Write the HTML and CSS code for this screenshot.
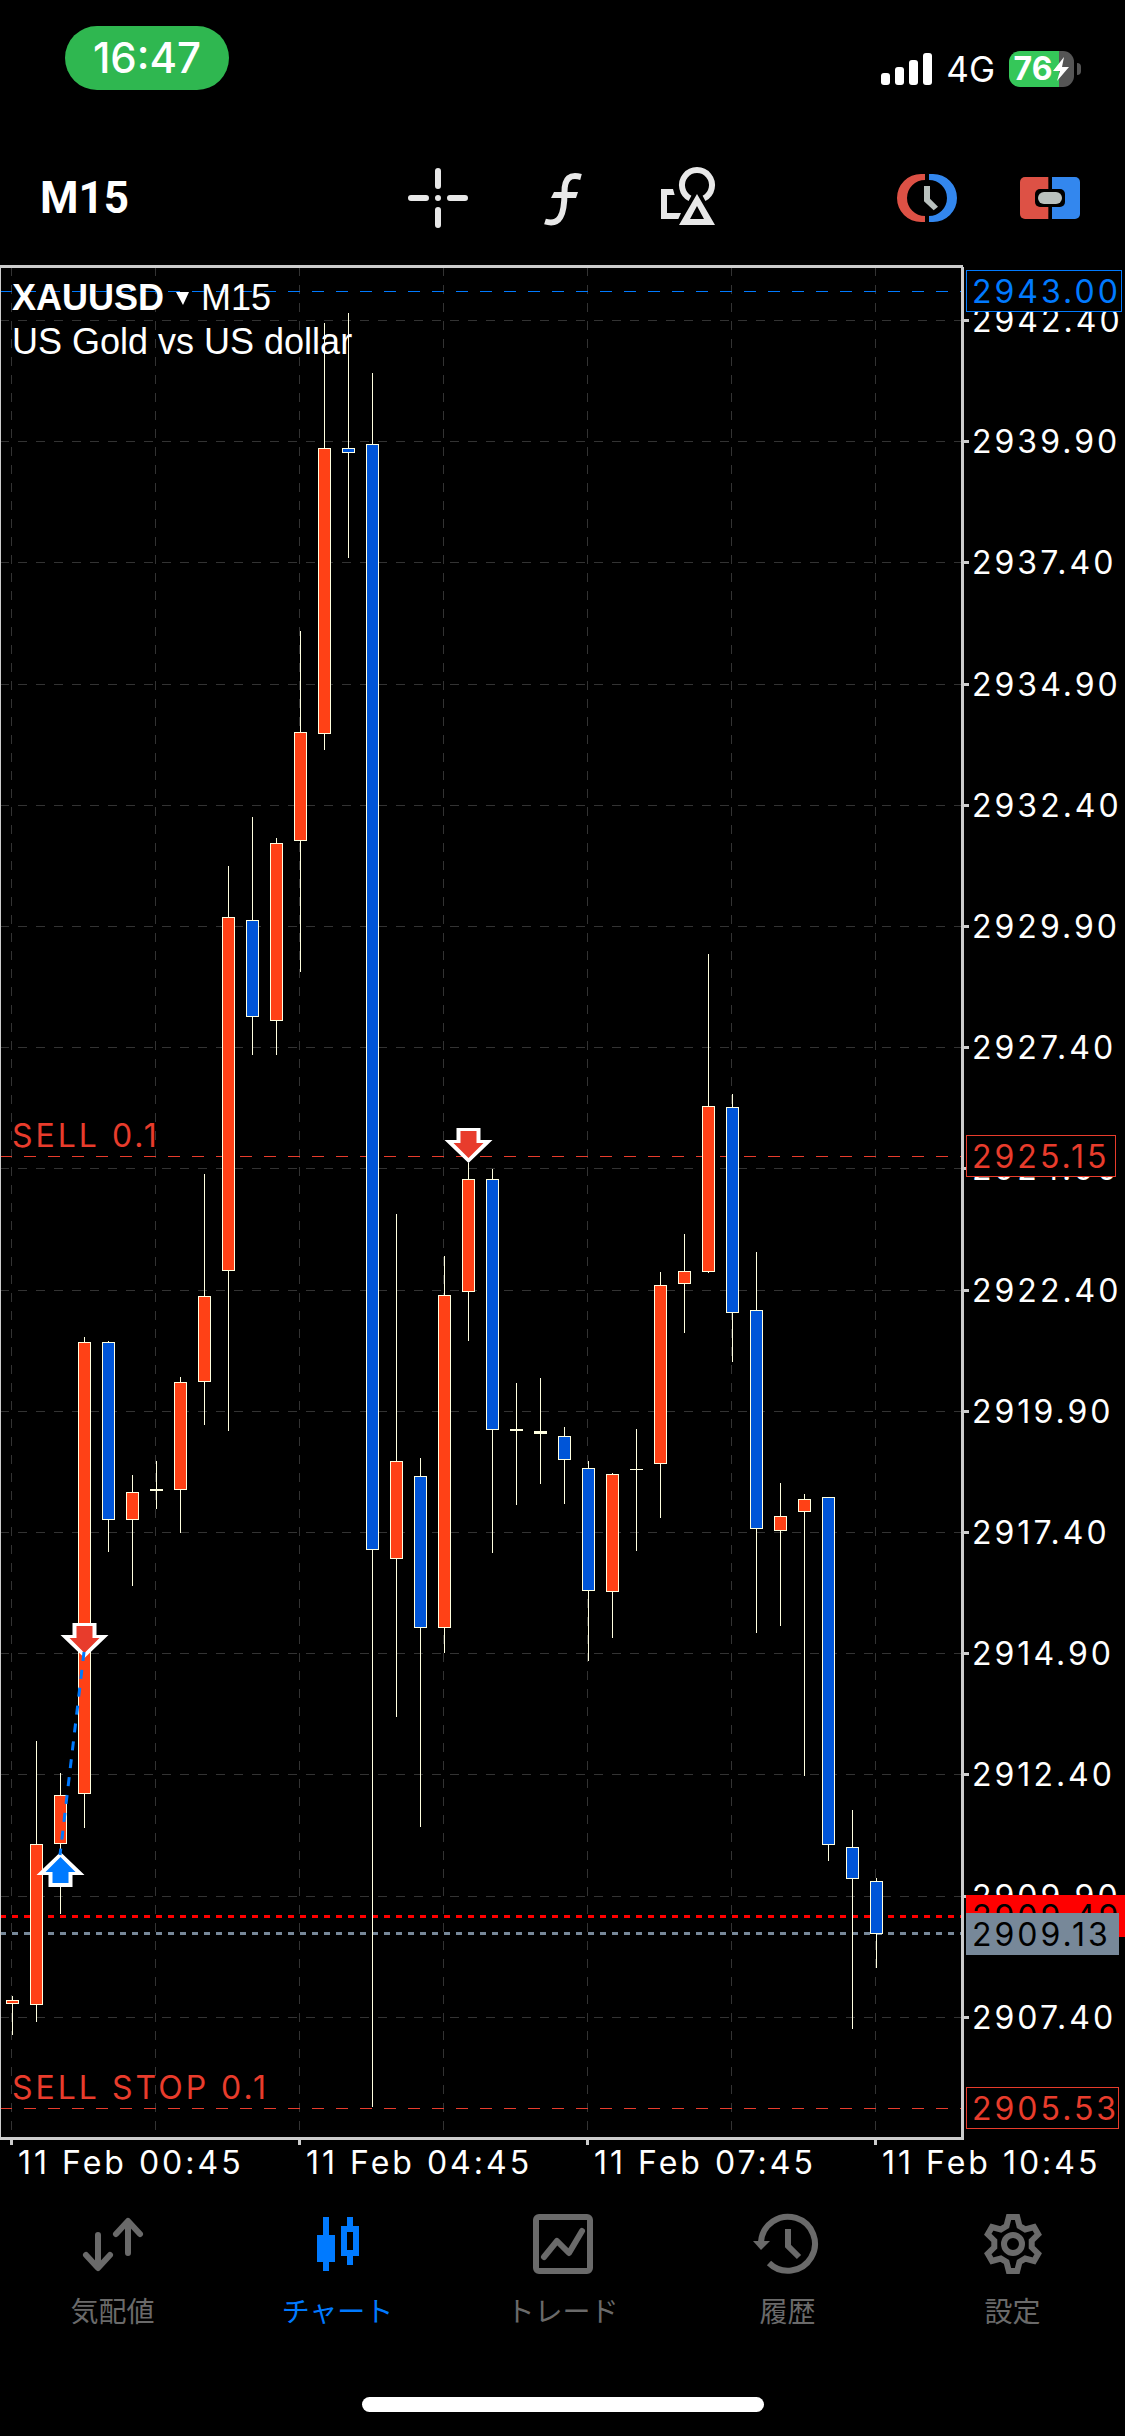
FILE: index.html
```html
<!DOCTYPE html>
<html lang="ja">
<head>
	<meta charset="utf-8">
	<meta name="viewport" content="width=device-width">
	<title>XAUUSD M15</title>
	<link rel="stylesheet" href="styles.css">
</head>
<body>
<header class="status">
	<span class="clock">16:47</span>
	<div class="status-right">
		<svg class="signal" viewBox="0 0 51 32">
			<rect x="0" y="20" width="9" height="12" rx="3"/>
			<rect x="14" y="14" width="9" height="18" rx="3"/>
			<rect x="28" y="7" width="9" height="25" rx="3"/>
			<rect x="42" y="0" width="9" height="32" rx="3"/>
		</svg>
		<span class="network">4G</span>
		<div class="battery">
			<span>76</span>
			<svg class="bolt" viewBox="0 0 16 24"><path d="M11 0 0 14H7L4 24 16 10H9Z"/></svg>
		</div>
	</div>
</header>

<div class="toolbar">
	<button class="timeframe">M15</button>
	<div class="tools">
		<button aria-label="Crosshair">
			<svg class="icon" viewBox="0 0 60 60" fill="none" stroke="#e8e8e8" stroke-width="6" stroke-linecap="round">
				<path d="M30 3V18M30 42V57M3 30H18M42 30H57M30 30H30"/>
			</svg>
		</button>
		<button aria-label="Indicators">
			<svg class="icon" viewBox="0 0 60 60">
				<path d="M48 9C37 6 31.500 10 31.500 24C31.500 47 27 58 12 53.500" fill="none" stroke="#e8e8e8" stroke-width="6"/>
				<path d="M21 24H45L43 30H18Z" fill="#e8e8e8"/>
			</svg>
		</button>
		<button aria-label="Objects">
			<svg class="icon" viewBox="0 0 180 180" fill="#e8e8e8">
				<path d="M9 63H45L50 81H27V135H69L61 153H9Z"/>
				<path d="M96 91A45 45 0 1 1 138 91" fill="none" stroke="#e8e8e8" stroke-width="18"/>
				<path d="M117 78 171 171H63ZM117 114 96 153H138Z" fill-rule="evenodd"/>
			</svg>
		</button>
	</div>
	<div class="trade-tools">
		<button aria-label="Pending order">
			<svg class="icon" viewBox="0 0 180 180">
				<path d="M84 18H72A72 72 0 0 0 72 162H84V144A54 54 0 0 1 84 36Z" fill="#dd5145"/>
				<path d="M96 18H108A72 72 0 0 1 108 162H96V144A54 54 0 0 0 96 36Z" fill="#3387ee"/>
				<path d="M81 54H99V92L123 116 110 127 81 100Z" fill="#b9c1be"/>
			</svg>
		</button>
		<button aria-label="One click trading">
			<svg class="icon" viewBox="0 0 180 180">
				<path d="M85 27H15A15 15 0 0 0 0 42V138A15 15 0 0 0 15 153H85Z" fill="#dd5145"/>
				<path d="M96 27H165A15 15 0 0 1 180 42V138A15 15 0 0 1 165 153H96Z" fill="#3387ee"/>
				<rect x="45" y="63" width="90" height="54" rx="15" fill="#000"/>
				<rect x="54" y="72" width="72" height="36" rx="18" fill="#b9c1be"/>
			</svg>
		</button>
	</div>
</div>

<main class="chart">
	<svg id="plot" viewBox="0 265 1125 1920"></svg>
	<div class="symbol">
		<button><b>XAUUSD</b><svg class="caret" viewBox="0 0 13 13"><path d="M0 0H13L7 13Z"/></svg>M15</button>
		<p>US Gold vs US dollar</p>
	</div>
</main>

<nav class="tabs">
	<a href="#quotes">
		<svg class="icon" viewBox="0 0 60 60" fill="none" stroke="currentColor" stroke-width="6" stroke-linecap="round" stroke-linejoin="round">
			<path d="M15 21V53M3 41 15 54 27 41M45 39V8M33 20 45 7 57 20"/>
		</svg>
		気配値
	</a>
	<a href="#chart" class="active">
		<svg class="icon" viewBox="0 0 60 60" fill="currentColor">
			<path d="M15 3H21V21H27V48H21V57H15V48H9V21H15Z"/>
			<path d="M39 3H45V12H51V42H45V51H39V42H33V12H39ZM39 18V36H45V18Z" fill-rule="evenodd"/>
		</svg>
		チャート
	</a>
	<a href="#trade">
		<svg class="icon" viewBox="0 0 60 60" fill="none" stroke="currentColor" stroke-width="6">
			<rect x="3" y="3" width="54" height="54" rx="3"/>
			<path d="M11 43 24 27 36 39 49 17" stroke-linecap="round" stroke-linejoin="round"/>
		</svg>
		トレード
	</a>
	<a href="#history">
		<svg class="icon" viewBox="0 0 60 60" fill="none" stroke="currentColor" stroke-width="6">
			<path d="M3 28A27 27 0 1 1 11 49M30 15V32L41 43"/>
			<path d="M-5 27H12L3 36Z" fill="currentColor" stroke="none"/>
		</svg>
		履歴
	</a>
	<a href="#settings">
		<svg class="icon" viewBox="-30 -30 60 60" fill="none" stroke="currentColor" stroke-width="6">
			<path d="M-4.200 -27H4.200L6.500 -18 12.200 -14.600 21 -17 25.200 -9.700 18.700 -3.300V3.300L25.200 9.700 21 17 12.200 14.600 6.500 18 4.200 27H-4.200L-6.500 18 -12.200 14.600 -21 17 -25.200 9.700 -18.700 3.300V-3.300L-25.200 -9.700 -21 -17 -12.200 -14.600 -6.500 -18Z"/>
			<circle r="9"/>
		</svg>
		設定
	</a>
</nav>
<div class="home-bar"></div>
<script src="chart.js"></script>
</body>
</html>
```
FILE: styles.css
```css
body {
	margin: 0;
	background: #000;
	color: #fff;
	font-family: Inter, "Noto Sans CJK JP", sans-serif;
}
button {
	margin: 0;
	padding: 0;
	border: 0;
	background: none;
	color: inherit;
	font: inherit;
}
svg {
	display: block;
}
.icon {
	width: 60px;
	height: 60px;
	overflow: visible;
}

/* status bar */
.status {
	display: flex;
	justify-content: space-between;
	align-items: flex-start;
	box-sizing: border-box;
	height: 131px;
	padding: 26px 44px 0 65px;
}
.clock {
	width: 164px;
	border-radius: 32px;
	background: #2fb750;
	font-size: 42px;
	font-weight: 500;
	line-height: 64px;
	text-align: center;
}
.status-right {
	display: flex;
	align-items: center;
	gap: 14px;
	padding-top: 25px;
}
.signal {
	width: 51px;
	height: 32px;
	fill: #fff;
}
.network {
	font-size: 35px;
	line-height: 36px;
}
.battery {
	display: flex;
	align-items: center;
	justify-content: center;
	gap: 1px;
	position: relative;
	width: 65px;
	height: 36px;
	margin-right: 7px;
	border-radius: 11px;
	background: linear-gradient(90deg, #35c759 50px, #555 50px);
	font-size: 32px;
	font-weight: 700;
	line-height: 36px;
}
.battery:after {
	content: "";
	position: absolute;
	right: -7px;
	top: 12px;
	width: 4px;
	height: 12px;
	border-radius: 0 4px 4px 0;
	background: #555;
}
.bolt {
	width: 16px;
	height: 24px;
	fill: #fff;
}

/* toolbar */
.toolbar {
	display: grid;
	grid-template-columns: 1fr auto 1fr;
	align-items: center;
	height: 134px;
	padding: 0 40px;
}
.timeframe {
	justify-self: start;
	font-family: Roboto, sans-serif;
	font-size: 44px;
	font-weight: 700;
}
.tools {
	display: flex;
	gap: 65px;
}
.trade-tools {
	display: flex;
	justify-self: end;
	gap: 63px;
	margin-right: 5px;
}

/* chart */
.chart {
	position: relative;
}
#plot {
	width: 100%;
	height: auto;
}
#plot text {
	fill: #fff;
	font-size: 32px;
	letter-spacing: 3px;
}
.symbol {
	position: absolute;
	top: 11px;
	left: 12px;
	font-family: "Liberation Sans", sans-serif;
	font-size: 36px;
	line-height: 44px;
}
.symbol button {
	display: flex;
	align-items: center;
}
.symbol p {
	margin: 0;
}
.caret {
	width: 13px;
	height: 13px;
	margin: 0 12px;
	fill: #fff;
}
#plot .grid {
	stroke: #333;
	stroke-dasharray: 9 9;
}
#plot .frame {
	fill: #ccc;
}
#plot .order {
	stroke: #e83c2c;
	stroke-dasharray: 12 12;
}
#plot .level {
	stroke: #007aff;
	stroke-dasharray: 12 12;
}
#plot .ask {
	stroke: #f00;
	stroke-width: 3;
	stroke-dasharray: 6 6;
}
#plot .bid {
	stroke: #789;
	stroke-width: 3;
	stroke-dasharray: 6 6;
}
#plot .wick {
	fill: #ffffe0;
}
#plot .body {
	stroke: #ffffe0;
}
#plot .up {
	fill: #ff4116;
}
#plot .down {
	fill: #0055d8;
}
#plot .deal {
	stroke: #007aff;
	stroke-width: 3;
	stroke-dasharray: 9 9;
}
#plot .order-text {
	fill: #e83c2c;
}
#plot .level-text {
	fill: #007aff;
}
#plot .dark-text {
	fill: #000;
}

/* tabs */
.tabs {
	display: grid;
	grid-template-columns: repeat(5, 1fr);
	padding-top: 29px;
}
.tabs a {
	display: flex;
	flex-direction: column;
	align-items: center;
	gap: 16px;
	color: #6a6a6a;
	font-family: "Noto Sans CJK JP", sans-serif;
	font-size: 28px;
	line-height: 40px;
	text-decoration: none;
}
.tabs a.active {
	color: #007aff;
}
.home-bar {
	width: 402px;
	height: 15px;
	margin: 67px auto 24px;
	border-radius: 8px;
	background: #fff;
}
```
FILE: chart.js
```js
const plot = document.getElementById('plot');
const STEP = 24;

// [high, low, body top, body bottom, direction]
const candles = [
	[1996, 2035, 2000, 2004, 'up'],
	[1741, 2022, 1844, 2005, 'up'],
	[1773, 1914, 1795, 1844, 'up'],
	[1337, 1828, 1342, 1794, 'up'],
	[1341, 1552, 1342, 1520, 'down'],
	[1475, 1586, 1492, 1520, 'up'],
	[1461, 1509, 1489, 1491, 'flat'],
	[1377, 1533, 1382, 1490, 'up'],
	[1174, 1425, 1296, 1382, 'up'],
	[866, 1431, 917, 1271, 'up'],
	[817, 1055, 920, 1017, 'down'],
	[838, 1055, 843, 1021, 'up'],
	[631, 972, 732, 841, 'up'],
	[323, 750, 448, 734, 'up'],
	[313, 558, 448, 453, 'down'],
	[373, 2107, 444, 1550, 'down'],
	[1214, 1717, 1461, 1559, 'up'],
	[1458, 1827, 1476, 1628, 'down'],
	[1256, 1653, 1295, 1628, 'up'],
	[1163, 1341, 1179, 1292, 'up'],
	[1169, 1553, 1179, 1430, 'down'],
	[1383, 1505, 1429, 1431, 'flat'],
	[1378, 1484, 1431, 1434, 'flat'],
	[1427, 1504, 1436, 1460, 'down'],
	[1461, 1661, 1468, 1591, 'down'],
	[1473, 1638, 1474, 1592, 'up'],
	[1429, 1551, 1469, 1470, 'flat'],
	[1272, 1518, 1285, 1464, 'up'],
	[1234, 1333, 1271, 1284, 'up'],
	[954, 1273, 1106, 1272, 'up'],
	[1094, 1362, 1107, 1313, 'down'],
	[1252, 1633, 1310, 1529, 'down'],
	[1483, 1626, 1516, 1531, 'up'],
	[1494, 1776, 1499, 1512, 'up'],
	[1497, 1861, 1497, 1845, 'down'],
	[1810, 2029, 1847, 1879, 'down'],
	[1878, 1968, 1881, 1934, 'down']
];

let out = '';

function line(cls, x1, y1, x2, y2) {
	out += `<line class="${cls}" x1="${x1}" y1="${y1}" x2="${x2}" y2="${y2}"/>`;
}
function rect(attrs, x, y, w, h) {
	out += `<rect ${attrs} x="${x}" y="${y}" width="${w}" height="${h}"/>`;
}
function text(cls, x, y, str) {
	out += `<text class="${cls}" x="${x}" y="${y}">${str}</text>`;
}

out += '<g shape-rendering="crispEdges">';

// grid
const rows = [];
for (let i = 0; i < 15; i++) {
	rows.push({ y: Math.round(320 + i * 121.2), price: (2942.4 - i * 2.5).toFixed(2) });
}
rows.forEach(row => line('grid', 0, row.y + 0.5, 961, row.y + 0.5));
for (let i = 0; i < 7; i++) {
	line('grid', 11.5 + i * 144, 267, 11.5 + i * 144, 2137);
}

// price levels
line('level', 0, 291.5, 961, 291.5);
line('order', 0, 1156.5, 961, 1156.5);
line('order', 0, 2108.5, 961, 2108.5);
line('ask', 0, 1916.5, 961, 1916.5);
line('bid', 0, 1933.5, 961, 1933.5);

// candles
candles.forEach(([high, low, top, bottom, dir], i) => {
	const x = 6 + i * STEP;
	rect('class="wick"', x + 6, high, 1, low - high);
	if (dir === 'flat') {
		rect('class="wick"', x, top, 13, bottom - top);
	} else {
		rect(`class="body ${dir}"`, x + 0.5, top + 0.5, 12, bottom - top - 1);
	}
});

// frame and ticks
rect('class="frame"', 0, 265, 963, 3);
rect('class="frame"', 961, 267, 3, 1873);
rect('class="frame"', 0, 2137, 963, 3);
rect('class="frame"', 0, 265, 1, 1874);
rows.forEach(row => rect('class="frame"', 964, row.y - 1, 5, 3));
out += '</g>';

// deals
function sellArrow(x, y) {
	out += `<g transform="translate(${x} ${y})">
		<path fill="#fff" d="M-12 0H12V12H24L0 35L-24 12H-12Z"/>
		<path fill="#e83c2c" d="M-8 3H8V15H15L0 30L-15 15H-8Z"/>
	</g>`;
}
sellArrow(84.5, 1623);
sellArrow(468.5, 1128);
out += `<g transform="translate(60.5 1852)">
	<path fill="#fff" d="M0 0L24 23H12V35H-12V23H-24Z"/>
	<path fill="#007aff" d="M0 5L15 20H8V31H-8V20H-15Z"/>
</g>`;
line('deal', 84, 1652, 60, 1855);

text('order-text', 12, 1147, 'SELL 0.1');
text('order-text', 12, 2099, 'SELL STOP 0.1');

// price scale
rows.forEach(row => text('', 972, row.y + 12, row.price));

function tag(y, width, fill, stroke, cls, price) {
	rect(`fill="${fill}" stroke="${stroke}" shape-rendering="crispEdges"`, 966.5, y - 20.5, width, 41);
	text(cls, 972, y + 12, price);
}
tag(291, 155, '#000', '#007aff', 'level-text', '2943.00');
tag(1156, 149, '#000', '#e83c2c', 'order-text', '2925.15');
tag(1916, 160, '#f00', '#f00', 'dark-text', '2909.49');
tag(1934, 152, '#789', '#789', 'dark-text', '2909.13');
tag(2108, 152, '#000', '#e83c2c', 'order-text', '2905.53');

// time scale
['00:45', '04:45', '07:45', '10:45'].forEach((time, i) => {
	const x = 10 + i * 288;
	rect('class="frame"', x, 2140, 3, 5);
	text('', x + 8, 2174, '11 Feb ' + time);
});

plot.innerHTML = out;
```
